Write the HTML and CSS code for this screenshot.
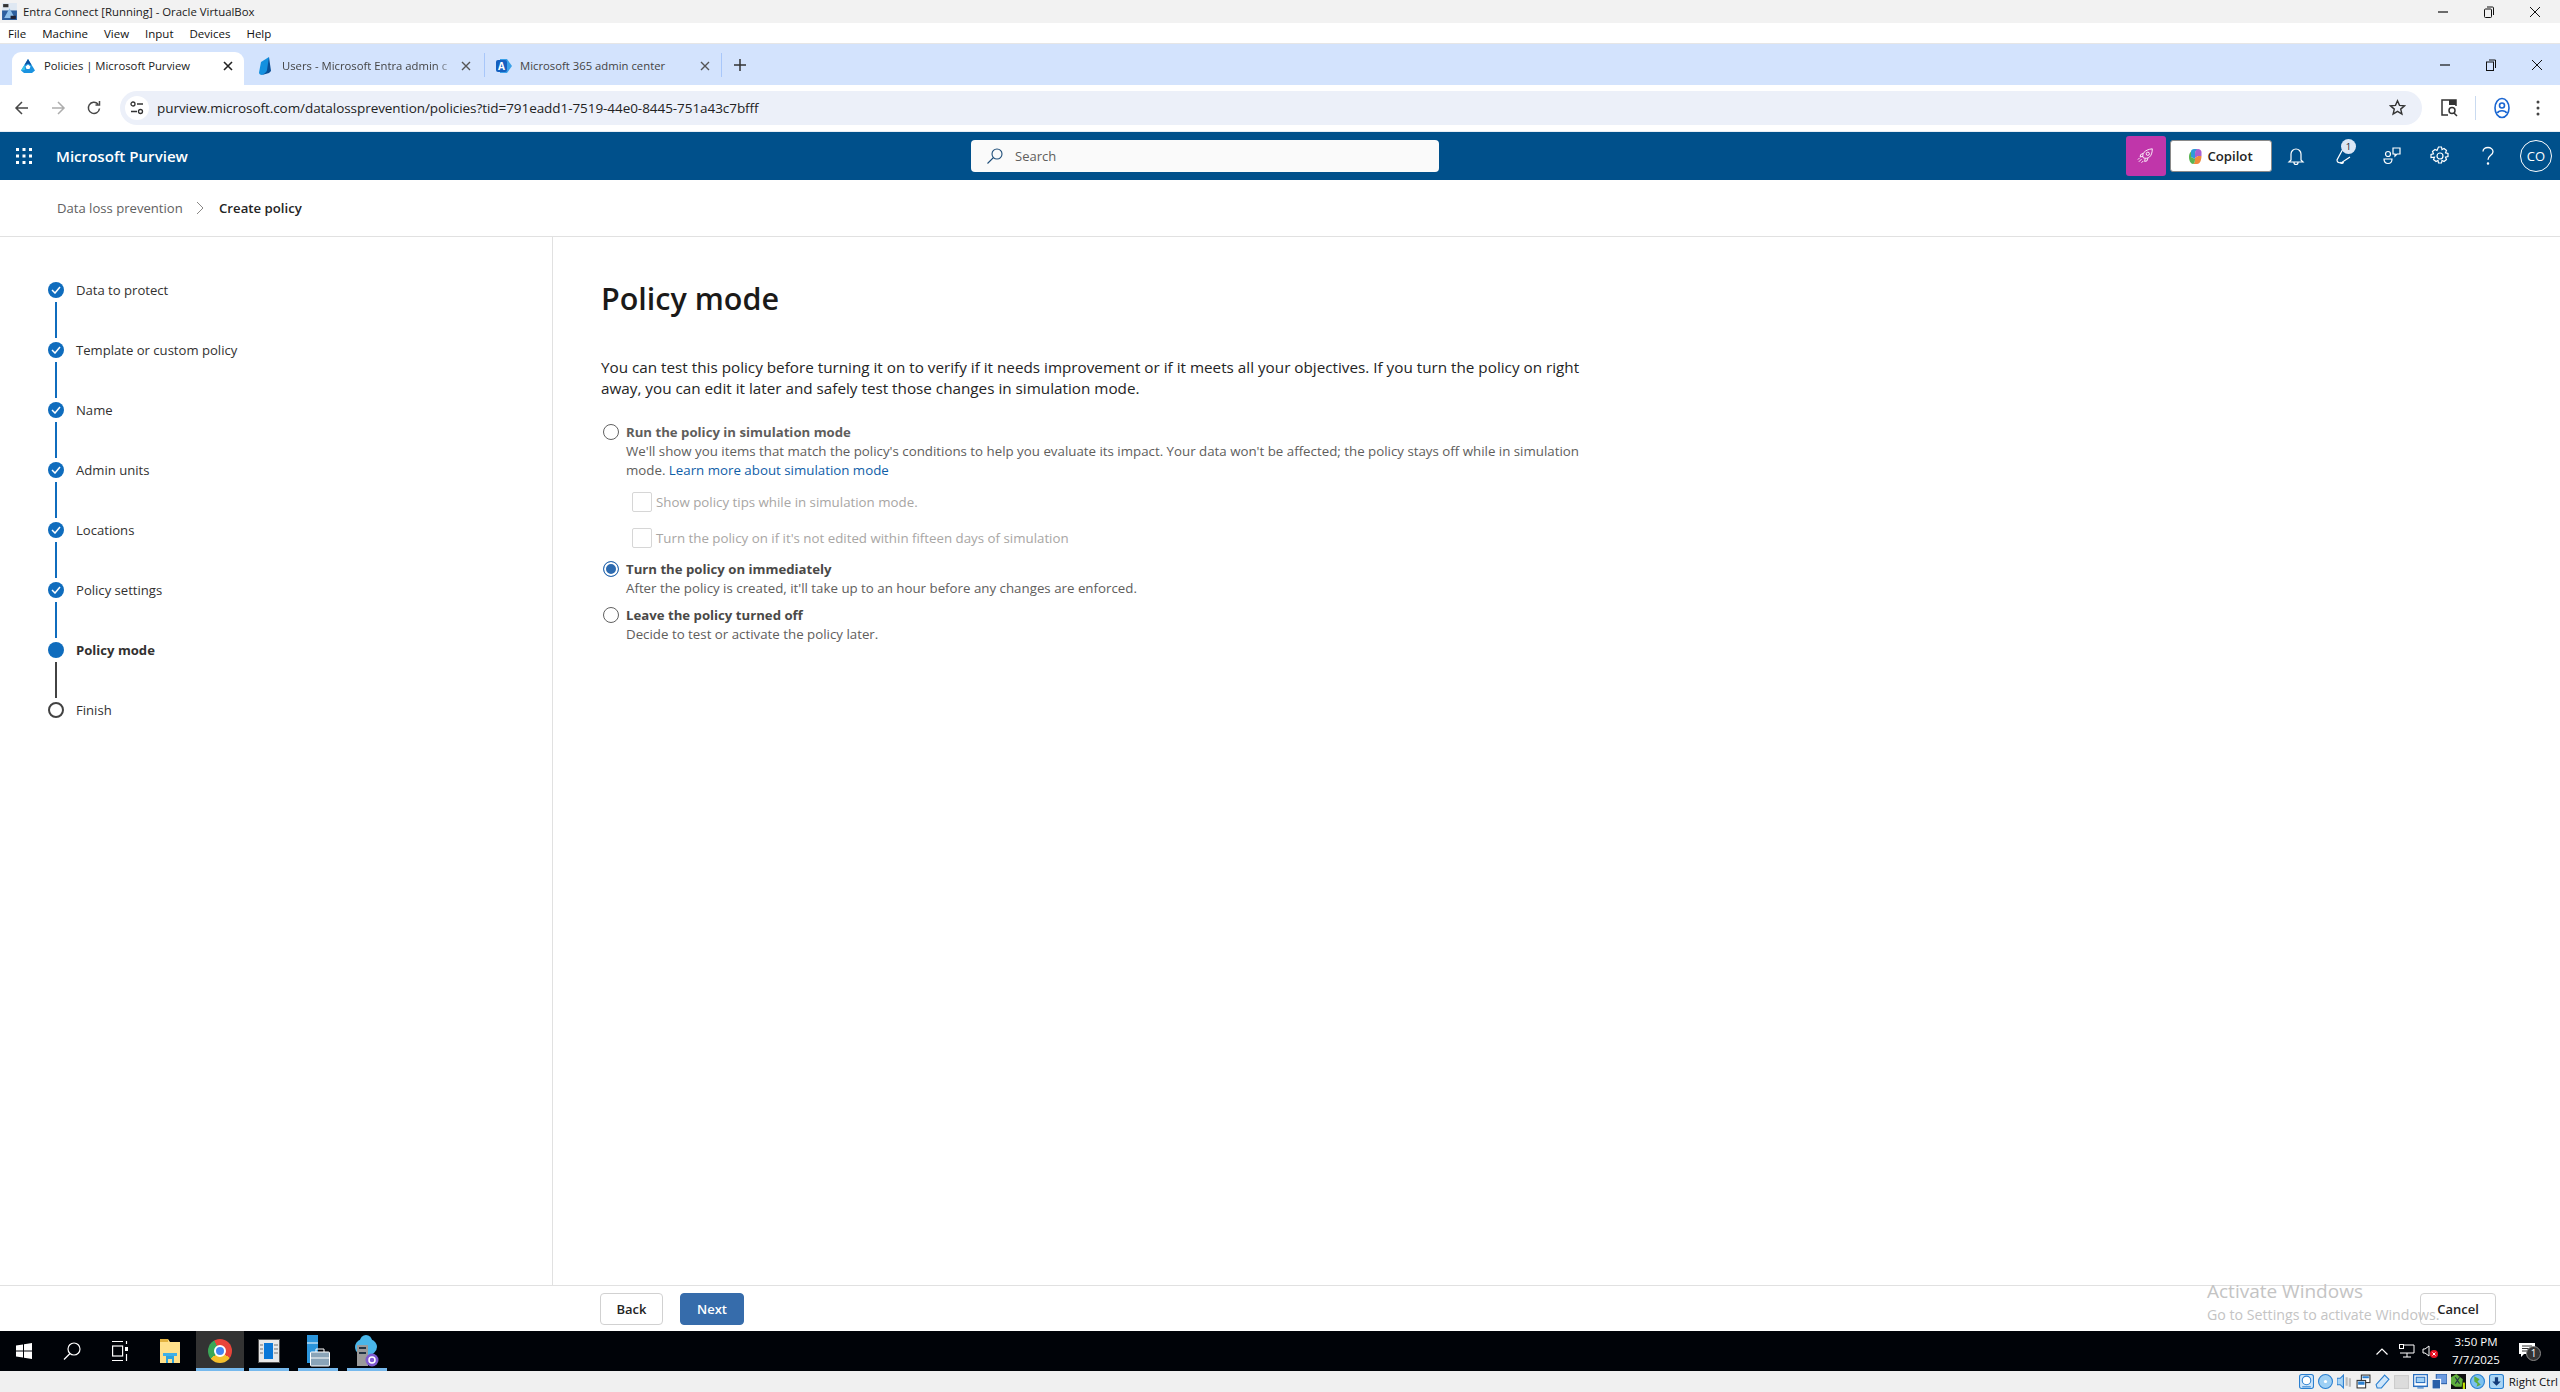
FILE: index.html
```html
<!DOCTYPE html>
<html>
  <head>
    <title>Policies | Microsoft Purview</title>
    <link rel="stylesheet" href="styles.css">
  </head>
  <body>
    <!-- virtualbox window -->
    <div class="vm-title">
      <svg class="vm-logo" width="15" height="17" viewBox="0 0 14 16"><rect width="14" height="16" fill="#dfe8f2"/><rect y="7" width="14" height="9" fill="#2d5f9e"/><path d="M2 14 7 5l5 9z" fill="#8fc0ea"/><rect x="1" y="1" width="5" height="3" fill="#333"/><rect x="8" y="12" width="5" height="3" fill="#223"/></svg>
      <span class="vm-title-text">Entra Connect [Running] - Oracle VirtualBox</span>
      <div class="win-btns vm-btns">
        <svg width="12" height="12" viewBox="0 0 12 12"><path d="M1 6h10" stroke="#111" stroke-width="1.2"/></svg>
        <svg width="12" height="12" viewBox="0 0 12 12" fill="none" stroke="#111"><rect x="1.5" y="3" width="7" height="8.5" rx="1"/><path d="M4 1h5.5a1 1 0 0 1 1 1v7"/></svg>
        <svg width="12" height="12" viewBox="0 0 12 12"><path d="M1 1l10 10M11 1 1 11" stroke="#111"/></svg>
      </div>
    </div>
    <div class="vm-menu">
      <span>File</span><span>Machine</span><span>View</span><span>Input</span><span>Devices</span><span>Help</span>
    </div>

    <!-- chrome -->
    <div class="tabstrip">
      <div class="tab tab-active">
        <svg width="16" height="16" viewBox="0 0 16 16"><path d="M8 1 15 12.5 12 15H4L1 12.5z" fill="#1b93e0"/><path d="M8 1l3.5 6L8 5.5 4.5 7z" fill="#0b4f9e"/><path d="M1 12.5 4.5 7 5 12z" fill="#37c6e8"/><path d="M5.5 8.5 8 6.5l2.5 2L9.5 11h-3z" fill="#fff"/></svg>
        <span class="tab-label">Policies | Microsoft Purview</span>
        <svg class="tab-x" width="10" height="10" viewBox="0 0 10 10"><path d="M1 1l8 8M9 1 1 9" stroke="#222" stroke-width="1.6"/></svg>
      </div>
      <div class="tab tab-entra">
        <svg width="16" height="18" viewBox="0 0 16 18"><path d="M11 0v15l-7 3c-2 0-3-1-3-2.5L3 5z" fill="#1490df"/><path d="M11 0l2 14-2 2-7 2c3-2 5-3 5-5z" fill="#0a4f96"/></svg>
        <span class="tab-label">Users - Microsoft Entra admin c</span>
        <svg class="tab-x" width="10" height="10" viewBox="0 0 10 10"><path d="M1 1l8 8M9 1 1 9" stroke="#555" stroke-width="1.4"/></svg>
      </div>
      <div class="tab-sep"></div>
      <div class="tab tab-admin">
        <svg width="16" height="16" viewBox="0 0 16 16"><path d="M4 1h7l5 7-5 7H4z" fill="#3aa0e8"/><rect x="0" y="2" width="11" height="12" rx="2" fill="#1460c0"/><text x="5.5" y="11.5" class="fav-a">A</text></svg>
        <span class="tab-label">Microsoft 365 admin center</span>
        <svg class="tab-x" width="10" height="10" viewBox="0 0 10 10"><path d="M1 1l8 8M9 1 1 9" stroke="#555" stroke-width="1.4"/></svg>
      </div>
      <div class="tab-sep"></div>
      <svg class="tab-plus" width="12" height="12" viewBox="0 0 12 12"><path d="M6 0v12M0 6h12" stroke="#333" stroke-width="1.5"/></svg>
      <div class="win-btns chrome-btns">
        <svg width="12" height="12" viewBox="0 0 12 12"><path d="M1 6h10" stroke="#111" stroke-width="1.2"/></svg>
        <svg width="12" height="12" viewBox="0 0 12 12" fill="none" stroke="#111"><rect x="1.5" y="3" width="7" height="8.5"/><path d="M4 1h6.5v8"/></svg>
        <svg width="12" height="12" viewBox="0 0 12 12"><path d="M1 1l10 10M11 1 1 11" stroke="#111"/></svg>
      </div>
    </div>
    <div class="toolbar">
      <svg class="nav-ico" width="16" height="16" viewBox="0 0 16 16" fill="none" stroke="#474747" stroke-width="1.5"><path d="M14 8H2M8 2 2 8l6 6"/></svg>
      <svg class="nav-ico" width="16" height="16" viewBox="0 0 16 16" fill="none" stroke="#adadad" stroke-width="1.5"><path d="M2 8h12M8 2l6 6-6 6"/></svg>
      <svg class="nav-ico" width="16" height="16" viewBox="0 0 16 16" fill="none" stroke="#474747" stroke-width="1.5"><path d="M13.5 8.5A5.6 5.6 0 1 1 12 4M13.5 1v4h-4"/></svg>
      <div class="omnibox">
        <div class="site-ico">
          <svg width="14" height="14" viewBox="0 0 14 14" fill="none" stroke="#333" stroke-width="1.3"><circle cx="3" cy="3" r="2"/><path d="M7 3h6M1 10.5h6"/><circle cx="10.5" cy="10.5" r="2"/></svg>
        </div>
        <span class="url">purview.microsoft.com/datalossprevention/policies?tid=791eadd1-7519-44e0-8445-751a43c7bfff</span>
        <svg class="star" width="17" height="17" viewBox="0 0 17 17" fill="none" stroke="#333" stroke-width="1.4"><path d="M8.5 1.8l2 4.6 5 .4-3.800 3.300 1.200 4.900-4.400-2.600L4.100 15l1.200-4.900L1.500 6.800l5-.4z"/></svg>
      </div>
      <svg class="tool-side" width="18" height="20" viewBox="0 0 18 20" fill="none" stroke="#333" stroke-width="1.5"><path d="M8 17H2V2h14v6"/><rect x="9" y="2" width="7" height="5" fill="#333" stroke="none"/><circle cx="12" cy="12.5" r="3"/><path d="M14 15l3 3"/></svg>
      <div class="tool-sep"></div>
      <svg class="tool-profile" width="16" height="22" viewBox="0 0 16 22" fill="none" stroke="#1a66d2" stroke-width="1.6"><ellipse cx="8" cy="11" rx="7" ry="9.5"/><circle cx="8" cy="8.5" r="2.5"/><path d="M3.5 16c1-3 8-3 9 0"/></svg>
      <svg class="tool-dots" width="4" height="16" viewBox="0 0 4 16" fill="#444"><circle cx="2" cy="2" r="1.5"/><circle cx="2" cy="8" r="1.5"/><circle cx="2" cy="14" r="1.5"/></svg>
    </div>

    <!-- purview header -->
    <header class="app-header">
      <div class="brand">
        <svg width="16" height="16" viewBox="0 0 16 16" fill="#fff"><rect width="3" height="3"/><rect x="6.5" width="3" height="3"/><rect x="13" width="3" height="3"/><rect y="6.5" width="3" height="3"/><rect x="6.5" y="6.5" width="3" height="3"/><rect x="13" y="6.5" width="3" height="3"/><rect y="13" width="3" height="3"/><rect x="6.5" y="13" width="3" height="3"/><rect x="13" y="13" width="3" height="3"/></svg>
        <span class="brand-name">Microsoft Purview</span>
      </div>
      <div class="search">
        <svg width="16" height="16" viewBox="0 0 16 16" fill="none" stroke="#1f4e79" stroke-width="1.1"><circle cx="10" cy="6" r="5"/><path d="M6.5 9.5.5 15.5"/></svg>
        <span>Search</span>
      </div>
      <div class="header-actions">
        <div class="pink-btn">
          <svg width="18" height="18" viewBox="0 0 20 20" fill="none" stroke="#fff" stroke-width="1"><path d="M7 12C5 8 8 3 17 2c0 9-5 12-10 10z"/><circle cx="12" cy="7.5" r="1.8"/><path d="M7 7 4 8.5 3.5 11l3-.5M12 12.5 11 15.500l-2.500.5.500-3M5 13.500l-3 3M7 15.500l-2 2M3 12l-2 2"/></svg>
        </div>
        <div class="copilot-btn">
          <svg width="13" height="15" viewBox="0 0 13 15"><path d="M2 2.5C2 1 3.5 0 5 0h4C7 1 6 3 6 5v5L2 8z" fill="#2f9bd8"/><path d="M9 0c2 0 3.500 1.500 3.500 3v4H9L6 9V5c0-3 1-5 3-5z" fill="#a95fd0"/><path d="M6 9l3-2h3.500c0 3-1 8-4.500 8H4C6 14 6 12 6 9z" fill="#f08a3c"/><path d="M0 8c0-2 .5-4 2-5.500V8l4 2c0 2-.5 5-2 5-2 0-4-3-4-7z" fill="#5ab552"/></svg>
          <span>Copilot</span>
        </div>
        <div class="head-cell">
          <svg width="18" height="20" viewBox="0 0 18 20" fill="none" stroke="#fff" stroke-width="1.2"><path d="M4 14V8a5 5 0 0 1 10 0v6l2 2H2zM7 16.5a2 2 0 0 0 4 0"/></svg>
        </div>
        <div class="head-cell">
          <div class="feedback">
            <svg width="18" height="20" viewBox="0 0 18 20" fill="none" stroke="#fff" stroke-width="1.2"><path d="M9 1 2 14c0 2 2 3 4 3l9-6M5 16c.5 2 3 2 3.5 0"/></svg>
            <span class="badge">1</span>
          </div>
        </div>
        <div class="head-cell">
          <svg width="20" height="20" viewBox="0 0 20 20" fill="none" stroke="#fff" stroke-width="1.2"><circle cx="6" cy="8" r="2.5"/><path d="M2 13h8c0 6-8 6-8 0zM11 2h7v6h-3l-2 2V8h-2z"/></svg>
        </div>
        <div class="head-cell">
          <svg width="20" height="20" viewBox="0 0 20 20" fill="none" stroke="#fff" stroke-width="1.2"><circle cx="10" cy="10" r="3"/><path d="M8.5 1h3l.5 2.500 2-1 2.500 2-1 2.300 2.500.7v3l-2.500.7 1 2.300-2.500 2-2-1-.5 2.500h-3l-.5-2.500-2 1-2.500-2 1-2.300L1 11.500v-3l2.500-.7-1-2.300 2.500-2 2 1z"/></svg>
        </div>
        <div class="head-cell">
          <svg width="14" height="20" viewBox="0 0 14 20" fill="none" stroke="#fff" stroke-width="1.3"><path d="M2 5.5C2 3 4.2 1.5 7 1.5s5 1.7 5 4.200c0 3.500-5 3.800-5 8"/><circle cx="7" cy="17.5" r=".6" fill="#fff"/></svg>
        </div>
        <div class="avatar">CO</div>
      </div>
    </header>

    <div class="crumbs">
      <span class="crumb">Data loss prevention</span>
      <svg width="8" height="14" viewBox="0 0 8 14" fill="none" stroke="#8a8886"><path d="M1 1l6 6-6 6"/></svg>
      <span class="crumb-current">Create policy</span>
    </div>

    <div class="wizard">
      <nav class="steps">
        <div class="step">
          <div class="step-mark"><span class="dot done"><svg width="10" height="8" viewBox="0 0 10 8" fill="none" stroke="#fff" stroke-width="1.5"><path d="M1 4l3 3 5-6"/></svg></span><span class="rail"></span></div>
          <span class="step-name">Data to protect</span>
        </div>
        <div class="step">
          <div class="step-mark"><span class="dot done"><svg width="10" height="8" viewBox="0 0 10 8" fill="none" stroke="#fff" stroke-width="1.5"><path d="M1 4l3 3 5-6"/></svg></span><span class="rail"></span></div>
          <span class="step-name">Template or custom policy</span>
        </div>
        <div class="step">
          <div class="step-mark"><span class="dot done"><svg width="10" height="8" viewBox="0 0 10 8" fill="none" stroke="#fff" stroke-width="1.5"><path d="M1 4l3 3 5-6"/></svg></span><span class="rail"></span></div>
          <span class="step-name">Name</span>
        </div>
        <div class="step">
          <div class="step-mark"><span class="dot done"><svg width="10" height="8" viewBox="0 0 10 8" fill="none" stroke="#fff" stroke-width="1.5"><path d="M1 4l3 3 5-6"/></svg></span><span class="rail"></span></div>
          <span class="step-name">Admin units</span>
        </div>
        <div class="step">
          <div class="step-mark"><span class="dot done"><svg width="10" height="8" viewBox="0 0 10 8" fill="none" stroke="#fff" stroke-width="1.5"><path d="M1 4l3 3 5-6"/></svg></span><span class="rail"></span></div>
          <span class="step-name">Locations</span>
        </div>
        <div class="step">
          <div class="step-mark"><span class="dot done"><svg width="10" height="8" viewBox="0 0 10 8" fill="none" stroke="#fff" stroke-width="1.5"><path d="M1 4l3 3 5-6"/></svg></span><span class="rail"></span></div>
          <span class="step-name">Policy settings</span>
        </div>
        <div class="step">
          <div class="step-mark"><span class="dot done"></span><span class="rail rail-dark"></span></div>
          <span class="step-name step-current">Policy mode</span>
        </div>
        <div class="step">
          <div class="step-mark"><span class="dot todo"></span></div>
          <span class="step-name">Finish</span>
        </div>
      </nav>

      <main class="content">
        <h1>Policy mode</h1>
        <p class="intro">You can test this policy before turning it on to verify if it needs improvement or if it meets all your objectives. If you turn the policy on right away, you can edit it later and safely test those changes in simulation mode.</p>

        <div class="option opt-first">
          <span class="radio"></span>
          <div class="option-body">
            <div class="option-title">Run the policy in simulation mode</div>
            <div class="option-desc">We'll show you items that match the policy's conditions to help you evaluate its impact. Your data won't be affected; the policy stays off while in simulation mode. <a href="#">Learn more about simulation mode</a></div>
          </div>
        </div>
        <div class="check check-first"><span class="box"></span><span>Show policy tips while in simulation mode.</span></div>
        <div class="check"><span class="box"></span><span>Turn the policy on if it's not edited within fifteen days of simulation</span></div>
        <div class="option opt-second">
          <span class="radio radio-on"></span>
          <div class="option-body">
            <div class="option-title">Turn the policy on immediately</div>
            <div class="option-desc">After the policy is created, it'll take up to an hour before any changes are enforced.</div>
          </div>
        </div>
        <div class="option opt-third">
          <span class="radio"></span>
          <div class="option-body">
            <div class="option-title">Leave the policy turned off</div>
            <div class="option-desc">Decide to test or activate the policy later.</div>
          </div>
        </div>
      </main>
    </div>

    <footer class="wizard-foot">
      <button class="btn">Back</button>
      <button class="btn btn-primary">Next</button>
      <button class="btn btn-cancel">Cancel</button>
    </footer>

    <div class="activate">
      <div class="activate-big">Activate Windows</div>
      <div class="activate-small">Go to Settings to activate Windows.</div>
    </div>

    <!-- guest taskbar -->
    <div class="taskbar">
      <div class="task task-start">
        <svg width="16" height="16" viewBox="0 0 16 16" fill="#fff"><path d="M0 2.5 7 1.500v6H0zM8 1.300 16 0v7.500H8zM0 8.500h7v6l-7-1zM8 8.500h8V16l-8-1.200z"/></svg>
      </div>
      <div class="task">
        <svg width="18" height="18" viewBox="0 0 18 18" fill="none" stroke="#fff" stroke-width="1.2"><circle cx="11" cy="7" r="6"/><path d="M7 11.5 1 17.5"/></svg>
      </div>
      <div class="task">
        <svg width="16" height="22" viewBox="0 0 16 22" fill="none" stroke="#fff" stroke-width="1.2"><path d="M0 1.5h11M0 20.5h11"/><rect x=".6" y="6" width="10" height="10"/><rect x="13" y="7" width="3" height="4" fill="#fff" stroke="none"/><path d="M14.5 1v3M14.5 14v7"/></svg>
      </div>
      <div class="task task-folder">
        <svg width="22" height="26" viewBox="0 0 22 26"><path d="M1 1h8l2 3h10v21H1z" fill="#ffe08a"/><path d="M1 1h8v3H1z" fill="#e3b340"/><path d="M7 25v-8h8v8h-2v-4H9v4z" fill="#2ea3dd"/><path d="M4 15h14v3H4z" fill="#3fb0e6"/></svg>
      </div>
      <div class="task task-open task-chrome"><span class="chrome-logo"><span></span></span></div>
      <div class="task task-open">
        <svg width="22" height="24" viewBox="0 0 22 24"><rect x=".5" y=".5" width="21" height="23" fill="#e8e8e8" stroke="#555"/><rect x="6" y="4" width="9" height="16" fill="#0b78d8"/><path d="M2 6h3M2 10h3M2 14h3M16 6h4M16 10h4M16 14h4" stroke="#999" stroke-width="1.5"/></svg>
      </div>
      <div class="task task-open">
        <svg width="24" height="32" viewBox="0 0 24 32"><rect x="1" y="0" width="11" height="28" fill="#2b95dc"/><path d="M1 8h11" stroke="#fff"/><rect x="4.5" y="17" width="19" height="14" rx="1" fill="#8aa4b8" stroke="#fff"/><path d="M10 17v-3h8v3" fill="none" stroke="#fff"/><path d="M5 23h18" stroke="#fff"/></svg>
      </div>
      <div class="task task-open">
        <svg width="24" height="32" viewBox="0 0 24 32"><ellipse cx="11" cy="12" rx="11" ry="9" fill="#49b6ea"/><circle cx="11" cy="6" r="6" fill="#49b6ea"/><rect x="2" y="10" width="11" height="21" fill="#9a9a9a"/><path d="M4 13h7M4 18h7" stroke="#234" stroke-width="2"/><circle cx="17" cy="25" r="6.5" fill="#7f5ad0"/><circle cx="17" cy="25" r="3" fill="none" stroke="#fff" stroke-width="1.5"/></svg>
      </div>
      <div class="tray">
        <svg width="12" height="7" viewBox="0 0 12 7" fill="none" stroke="#fff" stroke-width="1.2"><path d="M.5 6.5 6 1l5.5 5.500"/></svg>
        <svg class="tray-net" width="16" height="14" viewBox="0 0 16 14" fill="none" stroke="#fff"><path d="M3 1h12v8H1M8 9v4M4 13h8"/><rect x=".5" y=".5" width="4" height="4" fill="#000"/></svg>
        <svg class="tray-vol" width="16" height="14" viewBox="0 0 16 14"><path d="M1 5h2l4-3v10L3 9H1z" fill="none" stroke="#fff"/><circle cx="12" cy="10" r="4" fill="#e81123"/><path d="M10.5 8.5l3 3M13.5 8.5l-3 3" stroke="#fff"/></svg>
        <div class="clock"><span>3:50 PM</span><span>7/7/2025</span></div>
        <div class="notify">
          <svg width="16" height="15" viewBox="0 0 16 15"><path d="M0 0h16v11H5l-3 3v-3H0z" fill="#fff"/><path d="M3 3h10M3 5.500h10M3 8h7" stroke="#333"/></svg>
          <span class="notify-count">1</span>
        </div>
      </div>
    </div>

    <!-- virtualbox status bar -->
    <div class="vm-status">
      <svg class="st" viewBox="0 0 14 14"><rect x=".5" y=".5" width="13" height="13" rx="2" fill="#cfe6fa" stroke="#2a7fd0"/><circle cx="7" cy="6" r="4" fill="#fff" stroke="#2a7fd0"/><path d="M3 12h8" stroke="#2a7fd0"/></svg>
      <svg class="st" viewBox="0 0 14 14"><circle cx="7" cy="7" r="6.5" fill="#9ed0f5" stroke="#2a7fd0"/><circle cx="7" cy="7" r="1.5" fill="#fff"/></svg>
      <svg class="st" viewBox="0 0 14 14"><path d="M0 4h3l3-3v12L3 10H0z" fill="#a8d4f5" stroke="#2a7fd0"/><path d="M8 3h2v8H8zM11 4h2v8h-2z" fill="#bbb"/></svg>
      <svg class="st" viewBox="0 0 14 14"><rect x="5" y="1" width="8" height="7" fill="#fff" stroke="#333"/><rect x="1" y="6" width="8" height="7" fill="#fff" stroke="#333"/><path d="M2 7h6v3H2zM6 2h6v2H6z" fill="#2a7fd0"/></svg>
      <svg class="st" viewBox="0 0 14 14"><path d="M9 1l4 4-7 8H2l-1-3z" fill="#cfe6fa" stroke="#2a7fd0"/></svg>
      <svg class="st" viewBox="0 0 14 14"><rect x=".5" y="1.5" width="13" height="12" fill="#dcdcdc" stroke="#ccc"/></svg>
      <svg class="st" viewBox="0 0 14 14"><rect x=".5" y=".5" width="13" height="11" fill="#fff" stroke="#2a6fc0" stroke-width="1.4"/><rect x="3" y="3" width="8" height="5" fill="#9ecff5" stroke="#2a6fc0"/><path d="M4 13h6" stroke="#2a6fc0"/></svg>
      <svg class="st" viewBox="0 0 14 14"><rect x="4" y="0" width="10" height="9" fill="#6c9be0" stroke="#2a5fa8"/><rect x="0" y="5" width="8" height="9" fill="#2a5fa8" stroke="#fff"/></svg>
      <svg class="st" viewBox="0 0 14 14"><rect width="14" height="14" fill="#111"/><path d="M0 3l5-3 6 5-1 7H4L0 9z" fill="#5fae3c"/><path d="M4 3l4 6M8 3 4 9" stroke="#234"/><rect x="11" y="8" width="2" height="6" fill="#c9e600"/></svg>
      <svg class="st" viewBox="0 0 14 14"><circle cx="7" cy="7" r="6.5" fill="#7cc0ef" stroke="#2a7fd0"/><path d="M4 2l5 3-2 2 3 3-4 2 1-3-3-2z" fill="#5fae3c"/></svg>
      <svg class="st" viewBox="0 0 14 14"><rect x=".5" y=".5" width="13" height="13" rx="2" fill="#a8d4f5" stroke="#2a7fd0"/><path d="M5.5 3h3v4H11l-4 4-4-4h2.5z" fill="#123a78"/></svg>
      <span class="right-ctrl">Right Ctrl</span>
    </div>
  </body>
</html>
```

FILE: styles.css
```css
* {
  box-sizing: border-box;
}

html, body {
  margin: 0;
  height: 100%;
  overflow: hidden;
}

body {
  display: flex;
  flex-direction: column;
  font-family: "Open Sans", "Liberation Sans", sans-serif;
  color: #242424;
  background: #fff;
  position: relative;
}

/* virtualbox chrome */
.vm-title {
  height: 23px;
  background: #f2f2f2;
  display: flex;
  align-items: center;
  padding-left: 2px;
  font-size: 11.4px;
  color: #1a1a1a;
  flex: none;
}

.vm-logo {
  margin-right: 6px;
  flex: none;
}

.vm-title-text {
  white-space: nowrap;
}

.win-btns {
  margin-left: auto;
  display: flex;
  gap: 34px;
}

.chrome-btns {
  padding-right: 17px;
  align-self: center;
}

.vm-btns {
  padding-right: 19px;
}

.vm-menu {
  height: 21px;
  display: flex;
  align-items: center;
  gap: 16px;
  padding-left: 8px;
  font-size: 11.5px;
  flex: none;
  border-bottom: 1px solid #e6e6e6;
  color: #111;
}

.tabstrip {
  height: 41px;
  background: #d3e3fd;
  display: flex;
  align-items: flex-end;
  padding-left: 12px;
  flex: none;
}

.tab {
  height: 33px;
  display: flex;
  align-items: center;
  font-size: 11.3px;
  color: #444;
  padding-bottom: 6px;
  white-space: nowrap;
}

.tab-active {
  width: 232px;
  background: #fff;
  border-radius: 9px 9px 0 0;
  padding-left: 8px;
  color: #222;
}

.tab-active .tab-label {
  margin-left: 8px;
  width: 179px;
}

.tab-entra {
  width: 240px;
  padding-left: 14px;
}

.tab-entra .tab-label {
  margin-left: 8px;
  width: 171px;
  -webkit-mask-image: linear-gradient(90deg, #000 90%, rgba(0, 0, 0, 0.15) 100%);
  mask-image: linear-gradient(90deg, #000 90%, rgba(0, 0, 0, 0.15) 100%);
}

.tab-entra .tab-x {
  margin-left: 8px;
}

.tab-admin {
  width: 236px;
  padding-left: 11px;
}

.tab-admin .tab-label {
  margin-left: 8px;
  width: 180px;
}

.tab-sep {
  width: 1px;
  height: 24px;
  background: #a8c7fa;
  margin-bottom: 8px;
  flex: none;
}

.tab-plus {
  margin: 0 0 14px 12px;
}

.fav-a {
  font-size: 10px;
  font-weight: 700;
  fill: #fff;
  text-anchor: middle;
}

.toolbar {
  height: 47px;
  display: flex;
  align-items: center;
  padding: 0 0 1px 14px;
  border-bottom: 1px solid #e8edf4;
  flex: none;
}

.nav-ico {
  margin-right: 20px;
  flex: none;
}

.omnibox {
  margin-left: -2px;
  flex: none;
  width: 2302px;
  height: 34px;
  background: #ecf0f9;
  border-radius: 17px;
  display: flex;
  align-items: center;
  padding: 0 16px 0 5px;
}

.site-ico {
  width: 24px;
  height: 24px;
  border-radius: 50%;
  background: #fff;
  display: flex;
  align-items: center;
  justify-content: center;
  margin-right: 8px;
}

.url {
  font-size: 13.5px;
  color: #222;
  letter-spacing: -0.06px;
}

.star {
  margin-left: auto;
}

.tool-side {
  margin-left: 18px;
  flex: none;
}

.tool-sep {
  width: 1px;
  height: 24px;
  background: #c9daf0;
  margin-left: 17px;
  flex: none;
}

.tool-profile {
  margin-left: 18px;
  flex: none;
}

.tool-dots {
  margin-left: 26px;
  flex: none;
}

/* purview header */
.app-header {
  height: 48px;
  background: #00508b;
  display: grid;
  grid-template-columns: 971px 468px 1fr;
  align-items: center;
  color: #fff;
  flex: none;
}

.brand {
  display: flex;
  align-items: center;
  padding-left: 16px;
}

.brand-name {
  margin-left: 24px;
  font-size: 15.1px;
  font-weight: 600;
}

.search {
  height: 32px;
  background: #fafafa;
  border-radius: 4px;
  display: flex;
  align-items: center;
  padding-left: 16px;
  gap: 12px;
  font-size: 13px;
  color: #605e5c;
}

.header-actions {
  display: flex;
  align-items: center;
  justify-content: flex-end;
  padding-right: 8px;
  height: 100%;
}

.pink-btn {
  width: 40px;
  height: 40px;
  background: #c036aa;
  border-radius: 3px;
  display: flex;
  align-items: center;
  justify-content: center;
  margin-right: 4px;
}

.copilot-btn {
  width: 102px;
  height: 32px;
  background: #fff;
  border: 1px solid #8a8a8a;
  border-radius: 3px;
  display: flex;
  align-items: center;
  justify-content: center;
  gap: 5px;
  color: #242424;
  font-size: 13.2px;
  font-weight: 600;
}

.head-cell {
  width: 48px;
  height: 40px;
  display: flex;
  align-items: center;
  justify-content: center;
  flex: none;
}

.feedback {
  position: relative;
  width: 18px;
  height: 20px;
}

.badge {
  position: absolute;
  top: -7px;
  left: 6px;
  width: 15px;
  height: 15px;
  border-radius: 50%;
  background: #dbe6f5;
  color: #222;
  font-size: 9.5px;
  line-height: 15px;
  text-align: center;
}

.avatar {
  width: 32px;
  height: 32px;
  margin-left: 8px;
  border: 1px solid #fff;
  border-radius: 50%;
  display: flex;
  align-items: center;
  justify-content: center;
  font-size: 13px;
}

/* breadcrumb */
.crumbs {
  height: 57px;
  display: flex;
  align-items: center;
  padding-left: 57px;
  font-size: 13.1px;
  border-bottom: 1px solid #e1e1e1;
  flex: none;
}

.crumb {
  color: #616161;
  width: 139px;
}

.crumbs svg {
  margin-right: 15px;
}

.crumb-current {
  font-size: 13.2px;
  font-weight: 600;
  color: #242424;
}

/* wizard */
.wizard {
  flex: 1;
  min-height: 0;
  display: flex;
}

.steps {
  width: 553px;
  border-right: 1px solid #e1e1e1;
  padding: 45px 0 0 48px;
  flex: none;
}

.step {
  display: flex;
  height: 60px;
  gap: 12px;
}

.step-mark {
  width: 16px;
  display: flex;
  flex-direction: column;
  align-items: center;
}

.dot {
  width: 16px;
  height: 16px;
  border-radius: 50%;
  display: flex;
  align-items: center;
  justify-content: center;
  flex: none;
}

.done {
  background: #0f6cbd;
}

.todo {
  border: 2px solid #424242;
}

.rail {
  width: 2px;
  height: 36px;
  margin-top: 4px;
  background: #0f6cbd;
}

.rail-dark {
  background: #424242;
}

.step-name {
  font-size: 13.1px;
  line-height: 16px;
  color: #323130;
}

.step-current {
  font-weight: 700;
}

.content {
  padding: 43px 0 0 48px;
  flex: 1;
}

h1 {
  margin: 0;
  font-size: 30.5px;
  line-height: 36px;
  font-weight: 600;
  color: #1b1a19;
}

.intro {
  margin: 41px 0 0;
  width: 995px;
  font-size: 15.25px;
  line-height: 21px;
  color: #242424;
}

.option {
  display: flex;
  gap: 7px;
  margin-left: 2px;
}

.opt-first {
  margin-top: 24px;
}

.opt-second {
  margin-top: 12px;
}

.opt-third {
  margin-top: 8px;
}

.radio {
  width: 16px;
  height: 16px;
  border-radius: 50%;
  border: 1px solid #616161;
  margin-top: 1px;
  flex: none;
  background: #fff;
}

.radio-on {
  border: 1px solid #2d6bb0;
  box-shadow: inset 0 0 0 2px #fff;
  background: #2d6bb0;
}

.option-body {
  width: 960px;
  font-size: 13.3px;
  line-height: 19px;
  color: #605e5c;
}

.option-title {
  font-size: 13.2px;
  font-weight: 700;
  color: #5f5e5c;
}

.opt-second .option-title,
.opt-third .option-title {
  color: #4a4947;
}

.option-desc a {
  color: #0f5ea8;
  text-decoration: none;
}

.check {
  display: flex;
  align-items: center;
  gap: 4px;
  height: 20px;
  margin: 16px 0 0 31px;
  font-size: 13.3px;
  color: #a8a6a4;
}

.check-first {
  margin-top: 12px;
}

.box {
  width: 20px;
  height: 20px;
  border: 1px solid #d6d6d6;
  border-radius: 2px;
  flex: none;
}

.wizard-foot {
  height: 46px;
  border-top: 1px solid #e1e1e1;
  display: flex;
  align-items: center;
  gap: 17px;
  padding: 0 64px 0 600px;
  flex: none;
}

.btn {
  width: 63px;
  height: 32px;
  background: #fff;
  border: 1px solid #d1d1d1;
  border-radius: 4px;
  font-family: inherit;
  font-size: 13px;
  font-weight: 600;
  color: #242424;
  padding: 0;
}

.btn-primary {
  width: 64px;
  background: #366cab;
  border-color: #366cab;
  color: #fff;
}

.btn-cancel {
  width: 76px;
  margin-left: auto;
  position: relative;
  background: transparent;
}

.activate {
  position: absolute;
  left: 2207px;
  top: 1278px;
  color: #c4c4c4;
  white-space: nowrap;
}

.activate-big {
  font-size: 19px;
  line-height: 26px;
}

.activate-small {
  font-size: 14.2px;
  line-height: 20px;
  margin-top: 1px;
}

/* taskbar */
.taskbar {
  height: 40px;
  background: #000308;
  display: flex;
  color: #fff;
  flex: none;
}

.task {
  width: 48px;
  height: 40px;
  display: flex;
  align-items: center;
  justify-content: center;
  flex: none;
}

.task-folder {
  width: 52px;
}

.task-open {
  border-bottom: 3px solid #76b9ed;
  padding-top: 2px;
  width: 40px;
  margin-right: 9px;
}

.task-chrome {
  width: 48px;
  background: #333;
  margin-right: 5px;
}

.chrome-logo {
  width: 24px;
  height: 24px;
  border-radius: 50%;
  background: conic-gradient(#e8443a 0 125deg, #f5c02d 125deg 230deg, #3aa757 230deg 330deg, #e8443a 330deg);
  display: flex;
  align-items: center;
  justify-content: center;
}

.chrome-logo span {
  width: 12px;
  height: 12px;
  border-radius: 50%;
  background: #4285f4;
  border: 2px solid #fff;
}

.tray {
  margin-left: auto;
  display: flex;
  align-items: center;
  padding-right: 23px;
}

.tray-net {
  margin-left: 11px;
}

.tray-vol {
  margin-left: 7px;
}

.clock {
  width: 60px;
  margin-left: 8px;
  display: flex;
  flex-direction: column;
  align-items: center;
  font-size: 11.5px;
  line-height: 18px;
}

.notify {
  position: relative;
  margin-left: 13px;
  width: 18px;
  height: 20px;
}

.notify-count {
  position: absolute;
  left: 7px;
  top: 5px;
  width: 15px;
  height: 15px;
  border-radius: 50%;
  background: #333;
  border: 1px solid #888;
  font-size: 10px;
  line-height: 13px;
  text-align: center;
}

.vm-status {
  height: 21px;
  background: #f0f0f0;
  display: flex;
  align-items: center;
  justify-content: flex-end;
  gap: 4px;
  padding-right: 2px;
  flex: none;
}

.st {
  width: 15px;
  height: 15px;
  flex: none;
}

.right-ctrl {
  font-size: 11.5px;
  color: #111;
  margin-left: 1px;
  white-space: nowrap;
}
```
